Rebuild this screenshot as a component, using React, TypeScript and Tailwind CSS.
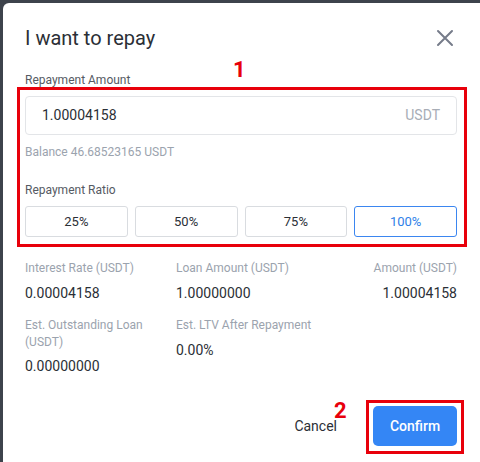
import React from "react";

export default function App() {
  const ratios = ["25%", "50%", "75%", "100%"];
  return (
    <div
      className="w-[480px] h-[462px] overflow-hidden bg-[#3d434c] relative"
      style={{ fontFamily: "Roboto, 'Liberation Sans', sans-serif" }}
    >
      <div className="ml-[3px] mt-[3px] h-[470px] bg-white rounded-tl-[6px] pl-[22px] pr-[23px] pt-[21px] relative">
        {/* Header */}
        <div className="flex items-center justify-between h-[28px]">
          <div className="text-[20px] leading-[28px] text-[#2b2f36]">I want to repay</div>
          <svg width="18" height="18" viewBox="0 0 18 18" className="mr-[3px]">
            <path d="M2 2 L16 16 M16 2 L2 16" stroke="#767c8a" strokeWidth="2" strokeLinecap="round" />
          </svg>
        </div>

        <div className="mt-[20px] text-[12px] leading-[16px] text-[#555a63]">Repayment Amount</div>
        <div className="mt-[8px] h-[39px] border border-[#e3e5e8] rounded-[4px] flex items-center justify-between pl-[16px] pr-[16px]">
          <span className="text-[14px] text-[#2b2f36]">1.00004158</span>
          <span className="text-[14px] text-[#a8adb6]">USDT</span>
        </div>
        <div className="mt-[9px] text-[12px] leading-[16px] text-[#9ba3ae]">Balance 46.68523165 USDT</div>

        <div className="mt-[22px] text-[12px] leading-[16px] text-[#555a63]">Repayment Ratio</div>
        <div className="mt-[8px] grid grid-cols-4 gap-[7px]">
          {ratios.map((r, i) => (
            <div
              key={r}
              className={
                i === 3
                  ? "h-[31px] rounded-[3px] border border-[#3b86f0] flex items-center justify-center text-[13px] text-[#2f7fe8]"
                  : "h-[31px] rounded-[3px] border border-[#d9dce0] flex items-center justify-center text-[13px] text-[#2b2f36]"
              }
            >
              {r}
            </div>
          ))}
        </div>

        {/* Info grid */}
        <div className="mt-[23px] grid grid-cols-[130px_130px_1fr] gap-x-[21px]">
          <div>
            <div className="text-[12px] leading-[17px] text-[#9ba3ae]">Interest Rate (USDT)</div>
            <div className="mt-[6px] text-[14px] leading-[20px] text-[#2b2f36]">0.00004158</div>
          </div>
          <div>
            <div className="text-[12px] leading-[17px] text-[#9ba3ae]">Loan Amount (USDT)</div>
            <div className="mt-[6px] text-[14px] leading-[20px] text-[#2b2f36]">1.00000000</div>
          </div>
          <div className="text-right">
            <div className="text-[12px] leading-[17px] text-[#9ba3ae]">Amount (USDT)</div>
            <div className="mt-[6px] text-[14px] leading-[20px] text-[#2b2f36]">1.00004158</div>
          </div>
          <div className="mt-[14px]">
            <div className="text-[12px] leading-[17px] text-[#9ba3ae]">Est. Outstanding Loan (USDT)</div>
            <div className="mt-[5px] text-[14px] leading-[20px] text-[#2b2f36]">0.00000000</div>
          </div>
          <div className="mt-[14px] col-span-2">
            <div className="text-[12px] leading-[17px] text-[#9ba3ae]">Est. LTV After Repayment</div>
            <div className="mt-[6px] text-[14px] leading-[20px] text-[#2b2f36]">0.00%</div>
          </div>
        </div>

        {/* Footer */}
        <div className="absolute left-0 right-0 top-[403px] pr-[23px] flex items-center justify-end">
          <span className="text-[14px] text-[#2b2f36] mr-[36px]">Cancel</span>
          <button className="h-[40px] w-[84px] rounded-[5px] bg-[#3486f5] text-white text-[14px] font-medium">
            Confirm
          </button>
        </div>
      </div>

      {/* Annotations */}
      <div className="absolute left-[17px] top-[87px] w-[450px] h-[160px] border-[3px] border-[#e8000b]" />
      <div className="absolute left-[233px] top-[57px] text-[22px] font-bold leading-[26px] text-[#e8000b]">1</div>
      <div className="absolute left-[366px] top-[400px] w-[98px] h-[54px] border-[3px] border-[#e8000b]" />
      <div className="absolute left-[334px] top-[398px] text-[22px] font-bold leading-[26px] text-[#e8000b]">2</div>
    </div>
  );
}
